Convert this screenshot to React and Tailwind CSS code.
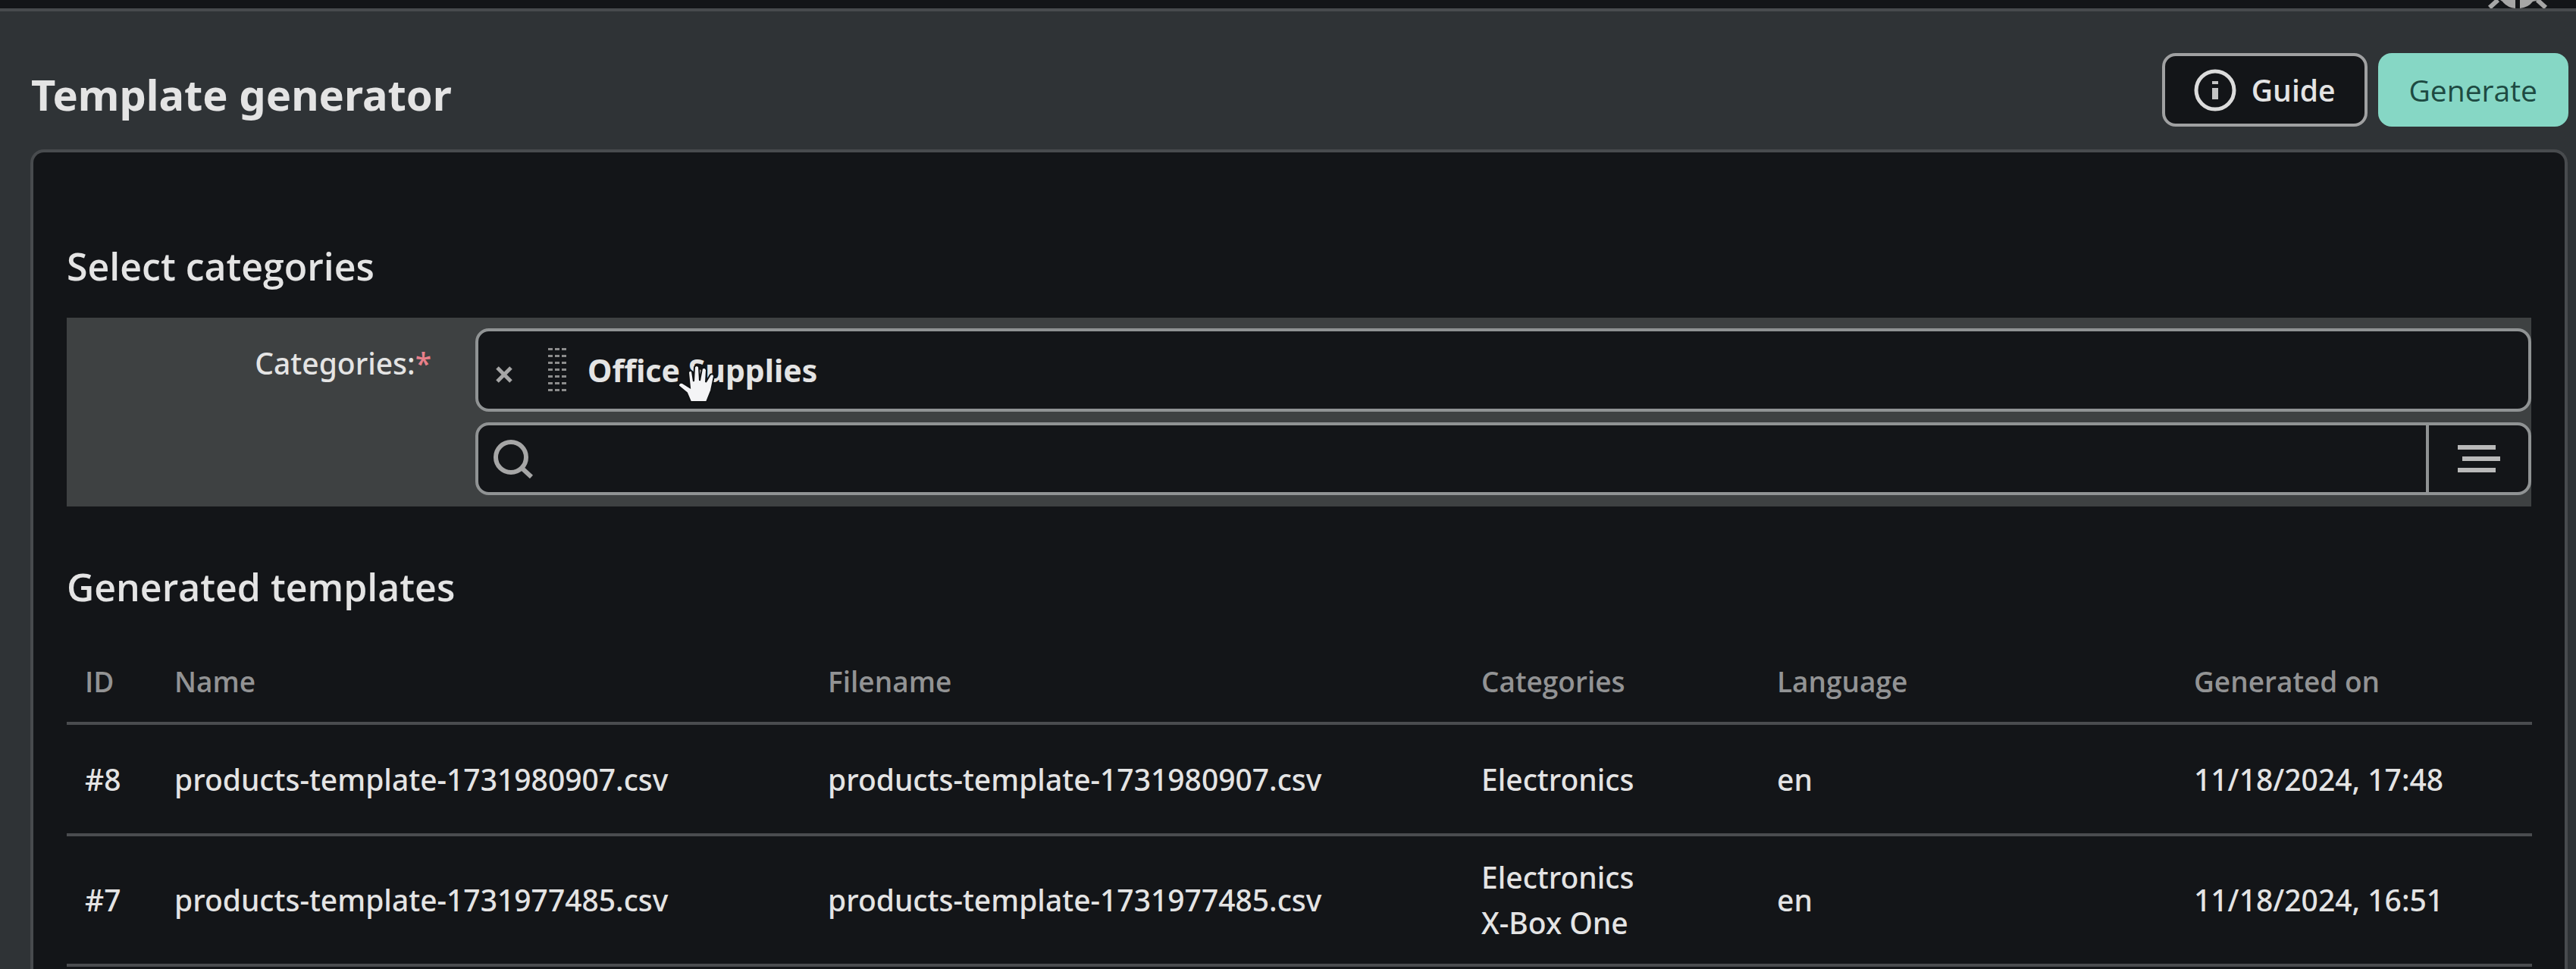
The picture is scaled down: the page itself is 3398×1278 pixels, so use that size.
import React, { useState } from 'react';

const templates = [
  {
    id: 8,
    name: 'products-template-1731980907.csv',
    filename: 'products-template-1731980907.csv',
    categories: ['Electronics'],
    language: 'en',
    generatedOn: '11/18/2024, 17:48',
  },
  {
    id: 7,
    name: 'products-template-1731977485.csv',
    filename: 'products-template-1731977485.csv',
    categories: ['Electronics', 'X-Box One'],
    language: 'en',
    generatedOn: '11/18/2024, 16:51',
  },
];

const columns = [
  { label: 'ID', width: 'w-[118px]' },
  { label: 'Name', width: 'w-[862px]' },
  { label: 'Filename', width: 'w-[862px]' },
  { label: 'Categories', width: 'w-[390px]' },
  { label: 'Language', width: 'w-[550px]' },
  { label: 'Generated on', width: 'w-[470px]' },
];

function BugIcon() {
  return (
    <svg className="absolute right-[37px] bottom-0 h-[11px] w-[80px]" viewBox="0 0 80 11" fill="none">
      <path d="M14 0L3 10M66 0L77 10" stroke="#a6a6a6" strokeWidth="6" />
      <path d="M11 0H37V11Q26 10 20 2L17 0ZM43 0H69L60 2Q54 10 43 11Z" fill="#a6a6a6" />
    </svg>
  );
}

function InfoIcon() {
  return (
    <svg className="h-14 w-14" viewBox="0 0 56 56" fill="none">
      <circle cx="28" cy="28" r="25" stroke="#dcdcdc" strokeWidth="5" />
      <path d="M24 16H32V20H24ZM24 25H32V40H24Z" fill="#c4c4c4" />
    </svg>
  );
}

function SearchIcon() {
  return (
    <svg className="h-[52px] w-[52px] shrink-0" viewBox="0 0 52 52" fill="none" stroke="#a6a6a6" strokeWidth="6">
      <circle cx="23" cy="24" r="20" />
      <path d="M37 38L50 50" />
    </svg>
  );
}

function ListIcon() {
  return (
    <svg className="h-9 w-14" viewBox="0 0 56 36" fill="#b9b9b9">
      <rect x="0" y="0" width="50" height="6" />
      <rect x="6" y="15" width="50" height="6" />
      <rect x="0" y="30" width="50" height="6" />
    </svg>
  );
}

function GripIcon() {
  const rows = [0, 9, 18, 27, 36, 45, 54];
  return (
    <svg className="h-[58px] w-6" viewBox="0 0 24 58" fill="#8c8c8c">
      {rows.map((y) => (
        <g key={y}>
          <rect x="0" y={y} width="6" height="3" />
          <rect x="9" y={y} width="6" height="3" />
          <rect x="18" y={y} width="6" height="3" />
        </g>
      ))}
    </svg>
  );
}

function HandCursor() {
  return (
    <svg className="pointer-events-none absolute top-[42px] left-[263px] h-[54px] w-[50px]" viewBox="0 0 50 54">
      <path
        d="M17 51L12 39L1 30Q1 25 6 26L16 32L14 12Q16 8 19 11L21 24L22 5Q25 1 28 5L29 23L32 7Q36 4 38 9L37 25L43 15Q47 13 48 17L44 36L38 51Z"
        fill="#f4f4f6"
        stroke="#111315"
        strokeWidth="2"
      />
    </svg>
  );
}

function CategoryPicker() {
  const [selected, setSelected] = useState(['Office Supplies']);
  const [query, setQuery] = useState('');

  function remove(name) {
    setSelected(selected.filter((item) => item !== name));
  }

  return (
    <div className="flex bg-[#3e4142] pt-3.5 pb-[15px]">
      <label htmlFor="category-search" className="w-[539px] shrink-0 pt-[18px] pr-[58px] text-right text-[39px] leading-[56px] font-medium">
        Categories:<span className="text-[#e8808a]">*</span>
      </label>
      <div className="flex flex-1 flex-col gap-3.5">
        {selected.map((name) => (
          <div key={name} className="relative flex h-[110px] items-center rounded-[18px] border-4 border-[#909394] bg-[#131518] pl-[22px]">
            <button type="button" aria-label={`Remove ${name}`} onClick={() => remove(name)} className="pt-3">
              <svg className="h-6 w-6" viewBox="0 0 24 24" stroke="#a6a6a6" strokeWidth="5">
                <path d="M3 3L21 21M21 3L3 21" />
              </svg>
            </button>
            <span className="ml-[46px]"><GripIcon /></span>
            <span className="ml-7 text-[41px] leading-[56px] font-bold">{name}</span>
            <HandCursor />
          </div>
        ))}
        <div className="flex h-24 rounded-[18px] border-4 border-[#909394] bg-[#131518]">
          <div className="flex flex-1 items-center gap-4 pl-5">
            <SearchIcon />
            <input
              id="category-search"
              type="text"
              value={query}
              onChange={(e) => setQuery(e.target.value)}
              className="min-w-0 flex-1 bg-transparent text-[39px] outline-none"
            />
          </div>
          <button type="button" aria-label="Browse categories" className="flex w-[135px] items-center justify-center border-l-4 border-[#909394]">
            <ListIcon />
          </button>
        </div>
      </div>
    </div>
  );
}

function TemplatesTable() {
  return (
    <table className="w-full table-fixed border-collapse text-left text-[39px] leading-[60px]">
      <thead>
        <tr className="border-b-4 border-[#4a4c4f] font-['Open_Sans','Noto_Sans',sans-serif] text-[37px] text-[#929394]">
          {columns.map((col) => (
            <th key={col.label} className={`${col.width} h-[116px] px-6 pt-2 font-semibold`}>{col.label}</th>
          ))}
        </tr>
      </thead>
      <tbody>
        {templates.map((row) => (
          <tr key={row.id} className="h-[147px] border-b-4 border-[#4a4c4f] font-medium">
            <td className="px-6 py-6">#{row.id}</td>
            <td className="px-6 py-6">{row.name}</td>
            <td className="px-6 py-6">{row.filename}</td>
            <td className="px-6 py-6">
              {row.categories.map((category) => (
                <div key={category}>{category}</div>
              ))}
            </td>
            <td className="px-6 py-6">{row.language}</td>
            <td className="px-6 py-6">{row.generatedOn}</td>
          </tr>
        ))}
      </tbody>
    </table>
  );
}

function App() {
  return (
    <div className="flex h-screen flex-col overflow-hidden bg-[#2f3336] font-['Noto_Sans','Open_Sans',sans-serif] text-[#e4e4e4]">
      <div className="relative h-[15px] shrink-0 border-b-4 border-[#484b4e] bg-[#131518]">
        <BugIcon />
      </div>
      <header className="flex items-start justify-between pt-[55px] pr-[10px] pb-[30px] pl-[41px]">
        <h1 className="pt-3 text-[56px] leading-[84px] font-bold">Template generator</h1>
        <div className="flex gap-3.5 font-['Open_Sans','Noto_Sans',sans-serif] text-[39px] leading-[56px]">
          <button type="button" className="flex h-[97px] items-center gap-5 rounded-[18px] border-4 border-[#a0a1a2] bg-[#131518] px-[38px] font-semibold">
            <InfoIcon />
            Guide
          </button>
          <button type="button" className="h-[97px] rounded-[18px] bg-[#86d7c5] px-[41px] text-[#1d4a42]">
            Generate
          </button>
        </div>
      </header>
      <main className="mr-[11px] ml-[40px] flex-1 rounded-t-[18px] border-4 border-b-0 border-[#484b4e] bg-[#131518] px-[44px] pt-[110px]">
        <h2 className="font-['Open_Sans','Noto_Sans',sans-serif] text-[50px] leading-[80px] font-semibold">Select categories</h2>
        <div className="pt-7">
          <CategoryPicker />
        </div>
        <h2 className="pt-[66px] pb-[24px] font-['Open_Sans','Noto_Sans',sans-serif] text-[50px] leading-[80px] font-semibold">Generated templates</h2>
        <TemplatesTable />
      </main>
    </div>
  );
}

export default App;
